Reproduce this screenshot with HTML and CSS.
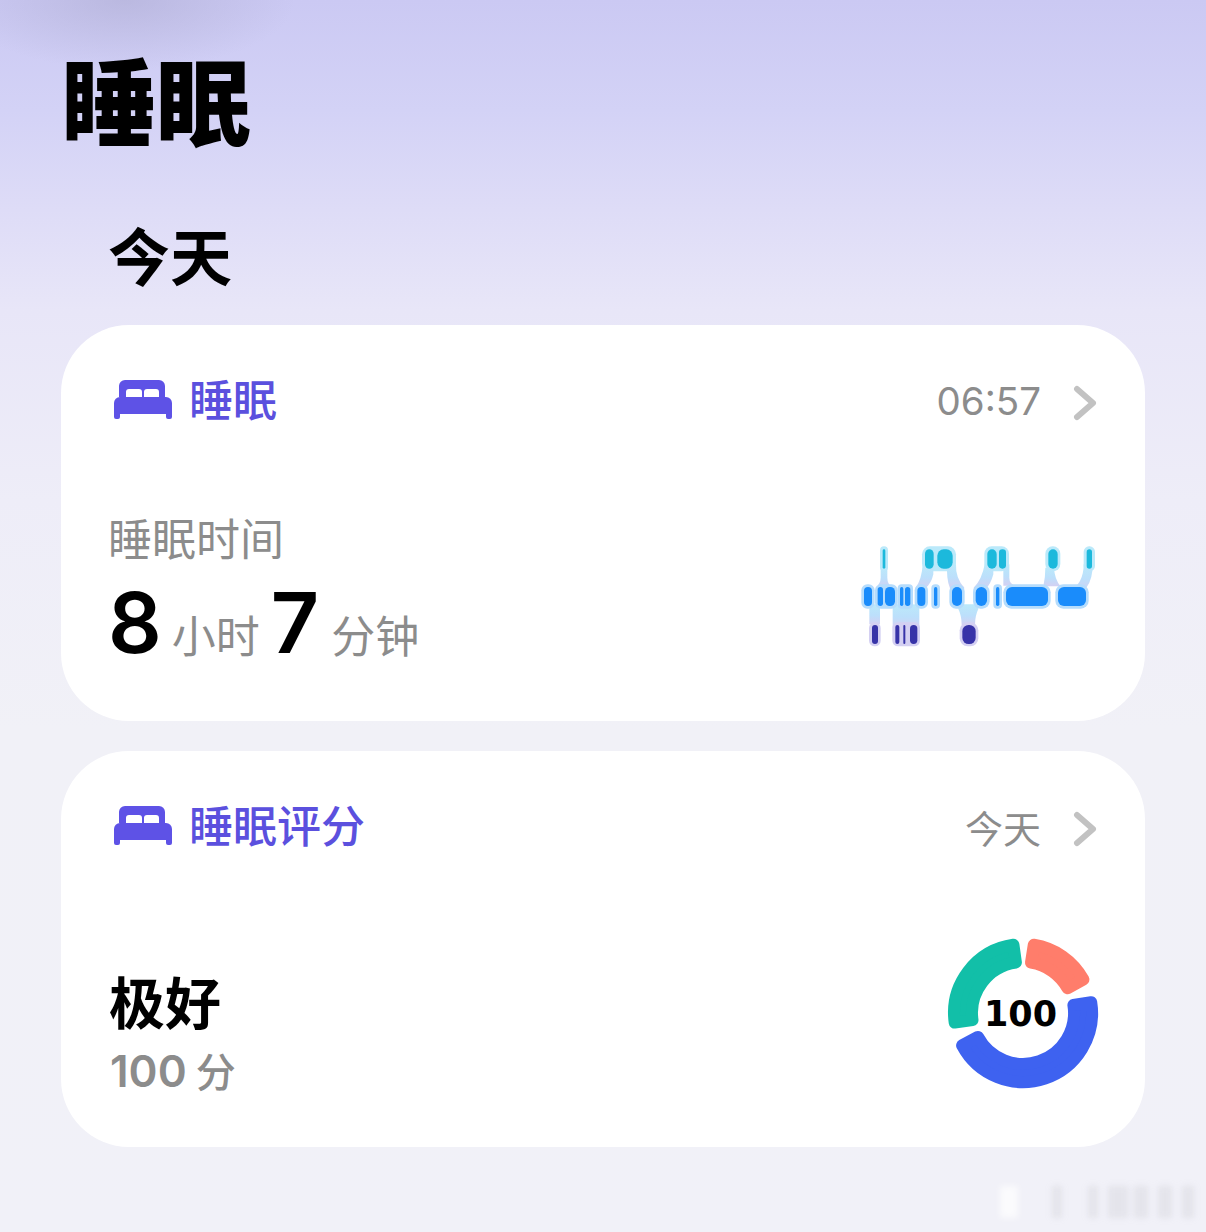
FILE: index.html
```html
<!DOCTYPE html>
<html lang="zh">
<head>
<meta charset="utf-8">
<title>睡眠</title>
<link rel="stylesheet" href="styles.css">
</head>
<body>
<svg width="0" height="0" class="defs">
  <defs>
    <symbol id="bed" viewBox="0 0 58 39">
      <path fill-rule="evenodd" d="M11 0H45a6 6 0 0 1 6 6V17H45V12a3 3 0 0 0-3-3H33a3 3 0 0 0-3 3V17H28V12a3 3 0 0 0-3-3H15a3 3 0 0 0-3 3V17H5V6a6 6 0 0 1 6-6Z"/>
      <path d="M6 17H52a6 6 0 0 1 6 6V37a2 2 0 0 1-2 2H54a2 2 0 0 1-2-2V34H6V37a2 2 0 0 1-2 2H2a2 2 0 0 1-2-2V23a6 6 0 0 1 6-6Z"/>
    </symbol>
    <symbol id="chev" viewBox="0 0 24 36">
      <path d="M4 4L20 18L4 32" fill="none" stroke="#c2c2c2" stroke-width="6" stroke-linecap="round" stroke-linejoin="round"/>
    </symbol>
  </defs>
</svg>
<main class="page">
  <h1 class="page-title">睡眠</h1>
  <h2 class="day">今天</h2>

  <section class="card">
    <header class="card-head">
      <svg class="bed"><use href="#bed"/></svg>
      <span class="card-title">睡眠</span>
      <span class="meta meta-time">06:57</span>
      <svg class="chev"><use href="#chev"/></svg>
    </header>
    <div class="card-body">
      <div class="stats">
        <div class="label">睡眠时间</div>
        <div class="duration"><b class="num">8</b><span class="unit">小时</span><b class="num">7</b><span class="unit">分钟</span></div>
      </div>
      <svg class="sleep" viewBox="0 0 780 390" aria-hidden="true">
        <defs>
          <linearGradient id="link" x1="0" y1="0" x2="0" y2="1">
            <stop offset="0" stop-color="#bbe9fa"/>
            <stop offset="0.55" stop-color="#bcdffb"/>
            <stop offset="1" stop-color="#d4d0f2"/>
          </linearGradient>
        </defs>
        <g class="halo-top">
          <rect x="90" y="46" width="24" height="75" rx="12"/>
          <rect x="216" y="46" width="102" height="75" rx="24"/>
          <rect x="403" y="46" width="74" height="75" rx="22"/>
          <rect x="586" y="46" width="45" height="75" rx="22"/>
          <rect x="701" y="46" width="34" height="75" rx="16"/>
        </g>
        <g class="links">
          <path d="M92 110h20v30q0 18 14 30h-50q16-12 16-30Z"/>
          <path d="M218 100h32v30q-6 28-24 42h-30q20-28 22-72Z"/>
          <path d="M292 100h26q-2 42 26 72h-44q-12-30-8-72Z"/>
          <path d="M404 100h26v30q-8 30-22 42h-38q26-26 34-72Z"/>
          <path d="M460 100h18v40q0 20 20 24h-38Z"/>
          <path d="M586 110h26q2 36 20 56h-52q6-26 6-56Z"/>
          <path d="M701 100h26v20q-4 40-28 60h-42q44-20 44-80Z"/>
          <path d="M58 220h32v60h-32Z"/>
          <path d="M128 220h80v70h-80Z"/>
          <path d="M325 220h60v14q-10 20-10 48h-40q0-28-10-48Z"/>
        </g>
        <g class="halo-mid">
          <rect x="34" y="160" width="40" height="73" rx="18"/>
          <rect x="75" y="160" width="68" height="73" rx="18"/>
          <rect x="143" y="160" width="46" height="73" rx="12"/>
          <rect x="194" y="160" width="40" height="73" rx="18"/>
          <rect x="244" y="160" width="26" height="73" rx="12"/>
          <rect x="298" y="160" width="46" height="73" rx="20"/>
          <rect x="369" y="160" width="50" height="73" rx="22"/>
          <rect x="430" y="160" width="26" height="73" rx="12"/>
          <rect x="460" y="160" width="142" height="73" rx="24"/>
          <rect x="616" y="160" width="100" height="73" rx="24"/>
        </g>
        <g class="halo-low">
          <rect x="57" y="274" width="35" height="72" rx="17"/>
          <rect x="127" y="274" width="83" height="72" rx="17"/>
          <rect x="329" y="274" width="56" height="72" rx="24"/>
        </g>
        <g class="bars-top">
          <rect x="98" y="55" width="8" height="58" rx="4"/>
          <rect x="225" y="55" width="26" height="58" rx="13"/>
          <rect x="262" y="55" width="46" height="58" rx="19"/>
          <rect x="412" y="55" width="28" height="58" rx="14"/>
          <rect x="447" y="55" width="21" height="58" rx="10"/>
          <rect x="595" y="55" width="28" height="58" rx="14"/>
          <rect x="710" y="55" width="16" height="58" rx="8"/>
        </g>
        <g class="bars-mid">
          <rect x="42" y="168" width="24" height="57" rx="12"/>
          <rect x="83" y="168" width="16" height="57" rx="8"/>
          <rect x="105" y="168" width="30" height="57" rx="14"/>
          <rect x="150" y="168" width="10" height="57" rx="5"/>
          <rect x="165" y="168" width="16" height="57" rx="8"/>
          <rect x="202" y="168" width="24" height="57" rx="12"/>
          <rect x="252" y="168" width="10" height="57" rx="5"/>
          <rect x="306" y="168" width="30" height="57" rx="15"/>
          <rect x="377" y="168" width="34" height="57" rx="17"/>
          <rect x="438" y="168" width="10" height="57" rx="5"/>
          <rect x="468" y="168" width="126" height="57" rx="18"/>
          <rect x="624" y="168" width="84" height="57" rx="18"/>
        </g>
        <g class="bars-low">
          <rect x="66" y="282" width="18" height="57" rx="9"/>
          <rect x="136" y="282" width="12" height="57" rx="6"/>
          <rect x="160" y="282" width="6" height="57" rx="3"/>
          <rect x="180" y="282" width="22" height="57" rx="11"/>
          <rect x="337" y="282" width="40" height="57" rx="19"/>
        </g>
      </svg>
    </div>
  </section>

  <section class="card">
    <header class="card-head">
      <svg class="bed"><use href="#bed"/></svg>
      <span class="card-title">睡眠评分</span>
      <span class="meta">今天</span>
      <svg class="chev"><use href="#chev"/></svg>
    </header>
    <div class="card-body score-body">
      <div class="stats">
        <div class="grade">极好</div>
        <div class="points"><span class="points-num">100</span> 分</div>
      </div>
      <div class="ring">
        <svg viewBox="-80 -80 160 160" aria-hidden="true">
          <path class="seg seg-teal" d="M-68.3 9.6A69 69 0 0 1-9.6-68.3L-7.1-50.5A51 51 0 0 0-50.5 7.1Z"/>
          <path class="seg seg-coral" d="M10.8-68.2A69 69 0 0 1 60.4-33.5L44.6-24.7A51 51 0 0 0 8-50.4Z"/>
          <path class="seg seg-blue" d="M68.2-10.8A69 69 0 0 1-60.9 32.4L-45 23.9A51 51 0 0 0 50.4-8Z"/>
        </svg>
        <span class="ring-num">100</span>
      </div>
    </div>
  </section>
</main>
<div class="watermark" aria-hidden="true">
  <i class="w1"></i><i class="w2"></i><i class="w3"></i><i class="w4"></i><i class="w5"></i><i class="w6"></i><i class="w7"></i>
</div>
</body>
</html>
```

FILE: styles.css
```css
* { box-sizing: border-box; }
html, body { margin: 0; }
body {
  width: 1206px;
  height: 1232px;
  overflow: hidden;
  position: relative;
  font-family: "Noto Sans CJK SC", "Noto Sans", sans-serif;
  background:
    radial-gradient(ellipse 170px 70px at 125px 0, rgba(170,168,205,.5), rgba(170,168,205,0) 100%),
    linear-gradient(180deg, #cbc9f3 0, #d3d2f6 110px, #dedcf7 210px, #e8e6f8 310px, #eeedf8 500px, #f1f1f7 730px, #f1f1f8 100%);
}
.defs { position: absolute; }
.page { padding: 38px 61px 0; }
.page-title {
  margin: 0;
  font-size: 95px;
  line-height: 120px;
  font-weight: 900;
  color: #000;
}
.day {
  margin: 52px 0 0 47px;
  font-size: 62px;
  line-height: 88px;
  font-weight: 700;
  color: #000;
  height: 115px;
}
.card {
  height: 396px;
  background: #fff;
  border-radius: 68px;
  padding: 56px 48px 0 49px;
  margin-top: 30px;
  display: flex;
  flex-direction: column;
}
.day + .card { margin-top: 0; }
.card-head {
  display: flex;
  align-items: center;
  height: 40px;
}
.bed { width: 58px; height: 39px; fill: #5e52e6; margin: 0 0 4px 4px; }
.card-title {
  margin: 0 0 6px 17px;
  font-size: 44px;
  line-height: 40px;
  font-weight: 500;
  color: #5b50de;
}
.meta {
  margin-left: auto;
  font-size: 38px;
  line-height: 40px;
  color: #8c8c8c;
}
.meta-time { font-family: Inter, sans-serif; font-weight: 400; font-size: 38.5px; }
.chev { width: 24px; height: 36px; margin: 4px 0 0 32px; flex: none; }
.card-body {
  display: flex;
  justify-content: space-between;
  align-items: flex-start;
}
.stats { padding-top: 86px; margin-left: -2px; }
.label {
  font-size: 44px;
  line-height: 60px;
  color: #8c8c8c;
}
.duration {
  display: flex;
  align-items: baseline;
  height: 66px;
  margin-top: 23px;
}
.num {
  font-family: Inter, sans-serif;
  font-size: 84px;
  line-height: 66px;
  font-weight: 600;
  color: #000;
}
.unit {
  margin: 0 11px 0 10px;
  font-size: 44px;
  line-height: 60px;
  color: #8c8c8c;
}
.unit:last-child { margin-left: 12px; }
.sleep {
  width: 260px;
  height: 130px;
  margin: 110px -13px 0 0;
  flex: none;
}
.halo-top rect { fill: #bbe9fa; }
.links path { fill: url(#link); }
.halo-mid rect { fill: #b5dcfc; }
.halo-low rect { fill: #d4d0f2; }
.bars-top rect { fill: #1cb9dc; }
.bars-mid rect { fill: #1a8cfb; }
.bars-low rect { fill: #3733a8; }
.score-body .stats { padding-top: 118px; }
.grade {
  margin-left: 1px;
  font-size: 56px;
  line-height: 70px;
  font-weight: 700;
  color: #000;
}
.points {
  margin-left: 2px;
  font-size: 40px;
  line-height: 70px;
  font-weight: 500;
  color: #8c8c8c;
}
.points-num { font-family: Inter, sans-serif; font-size: 44px; font-weight: 600; }
.ring {
  position: relative;
  width: 160px;
  height: 160px;
  margin: 86px -6px 0 0;
  flex: none;
}
.ring svg { width: 160px; height: 160px; display: block; }
.seg { stroke-width: 12; stroke-linejoin: round; }
.seg-teal { fill: #12bfa8; stroke: #12bfa8; }
.seg-coral { fill: #ff7d6b; stroke: #ff7d6b; }
.seg-blue { fill: #3e62f0; stroke: #3e62f0; }
.ring-num {
  position: absolute;
  inset: 0;
  display: flex;
  align-items: center;
  justify-content: center;
  padding: 2px 5px 0 0;
  font-family: "DejaVu Sans", sans-serif;
  font-size: 35px;
  font-weight: 700;
  color: #000;
}
.watermark {
  position: absolute;
  left: 1000px;
  top: 1186px;
  display: flex;
  align-items: flex-end;
  filter: blur(3px);
}
.watermark i { display: block; height: 32px; background: rgba(160,160,170,.16); }
.watermark .w1 { width: 18px; background: rgba(255,255,255,.7); }
.w2 { width: 10px; margin-left: 34px; }
.w3 { width: 10px; margin-left: 26px; }
.w4 { width: 20px; margin-left: 10px; }
.w5 { width: 14px; margin-left: 6px; }
.w6 { width: 14px; margin-left: 10px; }
.w7 { width: 12px; margin-left: 10px; }
```
